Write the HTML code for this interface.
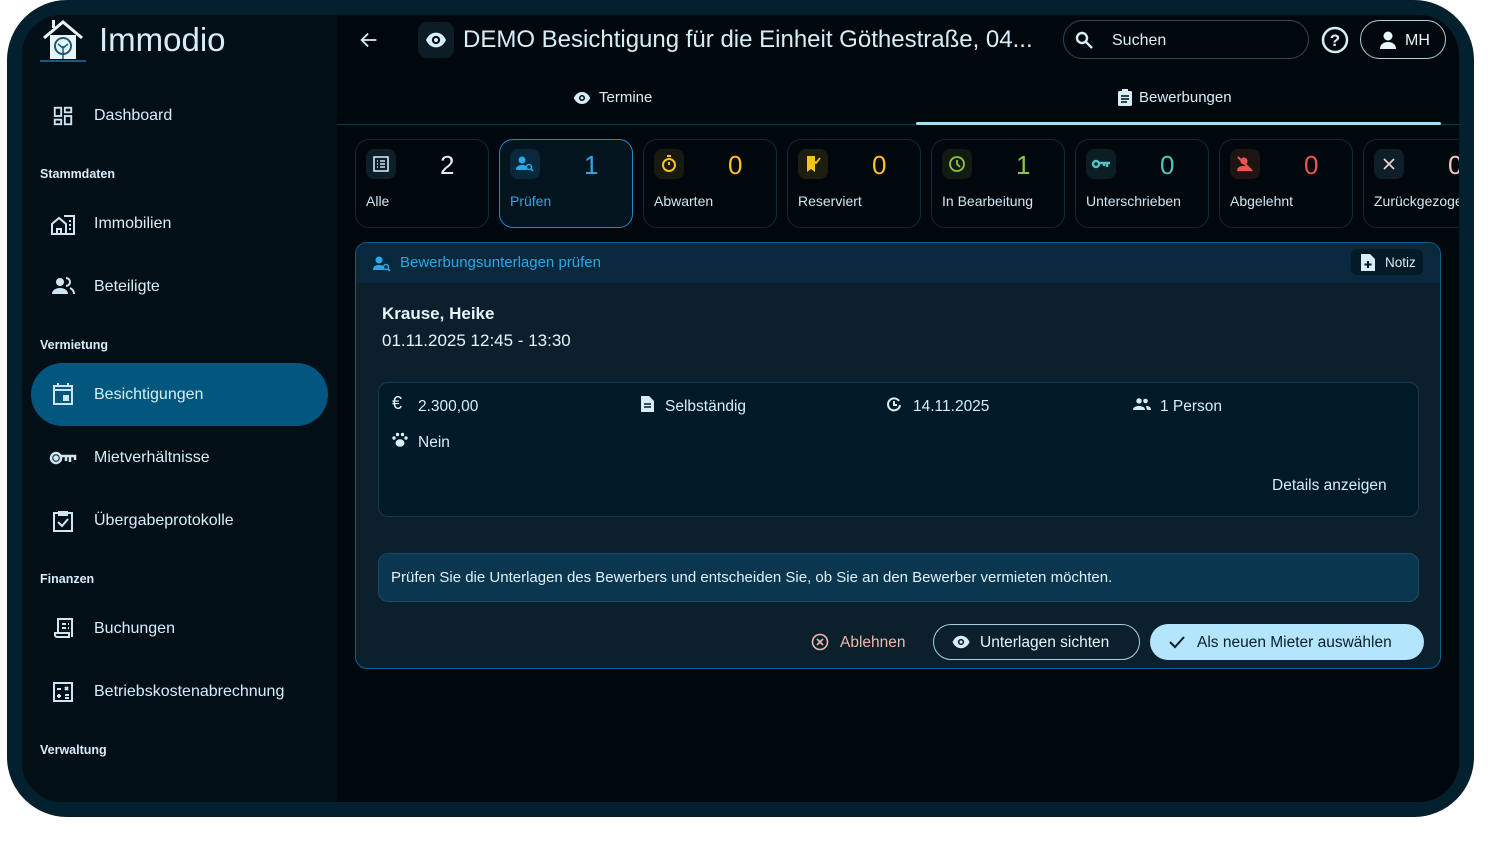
<!DOCTYPE html>
<html><head><meta charset="utf-8">
<style>
*{box-sizing:border-box;margin:0;padding:0}
body{width:1494px;height:846px;background:#fff;font-family:"Liberation Sans",sans-serif;position:relative;overflow:hidden;color:#d6eef8}
.frame{position:absolute;left:7px;top:0;width:1467px;height:817px;background:#03202f;border-radius:60px}
.screen{position:absolute;left:22px;top:15px;width:1437px;height:787px;background:#01080d;border-radius:40px;overflow:hidden}
.side{position:absolute;left:0;top:0;width:315px;height:787px;background:#020f17}
.abs{position:absolute}
.nav{position:absolute;left:72px;font-size:16px;color:#d6eef8}
.sec{position:absolute;left:18px;font-size:12.5px;font-weight:bold;color:#d6eef8}
.ic{position:absolute}
.tile{position:absolute;top:124px;width:134px;height:89px;border:1px solid #0d2a3a;border-radius:14px;background:#01080d}
.tile .ib{position:absolute;left:10px;top:9px;width:30px;height:30px;border-radius:8px;display:flex;align-items:center;justify-content:center}
.tile .n{position:absolute;left:84px;top:10px;font-size:26px}
.tile .l{position:absolute;left:10px;top:53px;font-size:14px;color:#cfe6f2;white-space:nowrap}
</style></head><body>
<div class="frame"></div>
<div class="screen">
 <div class="side">
  <svg class="ic" style="left:18px;top:3px" width="46" height="44" viewBox="0 0 46 44"><path d="M4 20 L23 4 L42 20" fill="none" stroke="#e8f6fc" stroke-width="3"/><rect x="10" y="17" width="26" height="24" fill="#e8f6fc"/><rect x="12" y="2" width="3" height="8" fill="#e8f6fc"/><circle cx="23" cy="28" r="8" fill="none" stroke="#1a5a7a" stroke-width="2"/><path d="M23 41V28M18 26l5 4 5-4" stroke="#1a5a7a" stroke-width="1.5" fill="none"/><rect x="0" y="42" width="46" height="2" fill="#1a5a7a"/></svg>
  <div class="abs" style="left:77px;top:6px;font-size:33px;color:#d6eef8">Immodio</div>

  <svg class="ic" style="left:30px;top:90px" width="22" height="22" viewBox="0 0 24 24" fill="none" stroke="#cfe6f2" stroke-width="2"><rect x="3" y="3" width="7" height="9"/><rect x="14" y="3" width="7" height="5"/><rect x="14" y="12" width="7" height="9"/><rect x="3" y="16" width="7" height="5"/></svg>
  <div class="nav" style="top:92px">Dashboard</div>
  <div class="sec" style="top:152px">Stammdaten</div>
  <svg class="ic" style="left:28px;top:198px" width="26" height="22" viewBox="0 0 26 22" fill="none" stroke="#cfe6f2" stroke-width="2"><path d="M2 21V11l7-6 7 6v10H2zM7 21v-5h4v5M14 3h10v18h-8"/><path d="M19 8h2M19 12h2M19 16h2"/></svg>
  <div class="nav" style="top:200px">Immobilien</div>
  <svg class="ic" style="left:29px;top:262px" width="24" height="18" viewBox="0 0 24 18" fill="#cfe6f2"><circle cx="9" cy="5" r="4"/><path d="M1 17c0-4 4-6 8-6s8 2 8 6z"/><path d="M15 1a4 4 0 0 1 0 8M19 11c2 1 4 3 4 6" stroke="#cfe6f2" stroke-width="2" fill="none"/></svg>
  <div class="nav" style="top:263px">Beteiligte</div>
  <div class="sec" style="top:323px">Vermietung</div>
  <div class="abs" style="left:9px;top:348px;width:297px;height:63px;border-radius:32px;background:#03577f"></div>
  <svg class="ic" style="left:30px;top:367px" width="22" height="24" viewBox="0 0 22 24" fill="none" stroke="#cfe6f2" stroke-width="2"><rect x="2" y="4" width="18" height="18"/><path d="M2 8h18M6 1v4M16 1v4"/><rect x="12" y="14" width="4" height="4" fill="#cfe6f2"/></svg>
  <div class="nav" style="top:371px">Besichtigungen</div>
  <svg class="ic" style="left:27px;top:435px" width="28" height="16" viewBox="0 0 28 16" fill="none" stroke="#cfe6f2" stroke-width="2.5"><circle cx="7" cy="8" r="5"/><circle cx="7" cy="8" r="1.5" fill="#cfe6f2"/><path d="M12 6h14v4M21 6v6M17 6v5"/></svg>
  <div class="nav" style="top:434px">Mietverhältnisse</div>
  <svg class="ic" style="left:30px;top:494px" width="22" height="24" viewBox="0 0 22 24" fill="none" stroke="#cfe6f2" stroke-width="2"><rect x="2" y="4" width="18" height="18"/><path d="M7 3h8v3H7zM6 13l4 4 6-7"/></svg>
  <div class="nav" style="top:497px">Übergabeprotokolle</div>
  <div class="sec" style="top:557px">Finanzen</div>
  <svg class="ic" style="left:31px;top:602px" width="22" height="22" viewBox="0 0 22 22" fill="none" stroke="#cfe6f2" stroke-width="2"><path d="M5 16V2h14v18M2 16h14v4H4a2 2 0 0 1-2-2zM9 7h4M9 11h4M15 7h1M15 11h1"/></svg>
  <div class="nav" style="top:605px">Buchungen</div>
  <svg class="ic" style="left:30px;top:666px" width="22" height="22" viewBox="0 0 22 22" fill="none" stroke="#cfe6f2" stroke-width="2"><rect x="2" y="2" width="18" height="18"/><path d="M5 8h4M13 6l3 3M16 6l-3 3M5 15h4M7 13v4M13 14h4M13 17h4"/></svg>
  <div class="nav" style="top:668px">Betriebskostenabrechnung</div>
  <div class="sec" style="top:728px">Verwaltung</div>
 </div>

 <!-- header -->
 <svg class="ic" style="left:336px;top:14px" width="22" height="22" viewBox="0 0 24 24" fill="none" stroke="#d6eef8" stroke-width="2"><path d="M20 12H4M11 5l-7 7 7 7"/></svg>
 <div class="abs" style="left:396px;top:7px;width:36px;height:36px;border-radius:9px;background:#0c1d28"></div>
 <svg class="ic" style="left:403px;top:15px" width="22" height="20" viewBox="0 0 24 20"><path d="M1 10C4 4 8 2 12 2s8 2 11 8c-3 6-7 8-11 8S4 16 1 10z" fill="#d6eef8"/><circle cx="12" cy="10" r="4.5" fill="#01080d"/><circle cx="12" cy="10" r="2.3" fill="#d6eef8"/></svg>
 <div class="abs" style="left:441px;top:11px;font-size:24px;color:#d6eef8;white-space:nowrap;width:580px;overflow:hidden">DEMO Besichtigung für die Einheit Göthestraße, 04...</div>
 <div class="abs" style="left:1041px;top:5px;width:246px;height:39px;border:1px solid #2a4a5a;border-radius:20px"></div>
 <svg class="ic" style="left:1053px;top:16px" width="18" height="18" viewBox="0 0 18 18" fill="none" stroke="#d6eef8" stroke-width="2.4"><circle cx="7" cy="7" r="5"/><path d="M11 11l6 6"/></svg>
 <div class="abs" style="left:1090px;top:17px;font-size:16px">Suchen</div>
 <svg class="ic" style="left:1299px;top:11px" width="28" height="28" viewBox="0 0 28 28"><circle cx="14" cy="14" r="12" fill="none" stroke="#d6eef8" stroke-width="2.5"/><text x="14" y="20" text-anchor="middle" font-size="17" font-weight="bold" fill="#d6eef8" font-family="Liberation Sans">?</text></svg>
 <div class="abs" style="left:1338px;top:5px;width:86px;height:39px;border:1.5px solid #a8cfe0;border-radius:20px"></div>
 <svg class="ic" style="left:1356px;top:15px" width="20" height="20" viewBox="0 0 20 20" fill="#e8f6fc"><circle cx="10" cy="6" r="4.5"/><path d="M2 19c0-5 4-7 8-7s8 2 8 7z"/></svg>
 <div class="abs" style="left:1383px;top:17px;font-size:16px;color:#e8f6fc">MH</div>

 <!-- tabs -->
 <svg class="ic" style="left:551px;top:76px" width="18" height="14" viewBox="0 0 24 18"><path d="M1 9C4 3 8 1 12 1s8 2 11 8c-3 6-7 8-11 8S4 15 1 9z" fill="#d6eef8"/><circle cx="12" cy="9" r="4" fill="#01080d"/><circle cx="12" cy="9" r="2" fill="#d6eef8"/></svg>
 <div class="abs" style="left:577px;top:74px;font-size:15px">Termine</div>
 <svg class="ic" style="left:1096px;top:74px" width="14" height="17" viewBox="0 0 14 17"><rect x="0" y="2" width="14" height="15" rx="1.5" fill="#d6eef8"/><rect x="4" y="0" width="6" height="4" fill="#d6eef8"/><path d="M3 7h8M3 10h8M3 13h6" stroke="#01080d" stroke-width="1.5"/></svg>
 <div class="abs" style="left:1117px;top:74px;font-size:15px">Bewerbungen</div>
 <div class="abs" style="left:315px;top:109px;width:1122px;height:1px;background:#0b3a52"></div>
 <div class="abs" style="left:894px;top:107px;width:525px;height:3px;border-radius:2px;background:#a8def5"></div>

 <!-- tiles -->
 <div class="tile" style="left:333px"><div class="ib" style="background:#0f1f29"><svg width="16" height="16" viewBox="0 0 16 16" fill="none" stroke="#cfe6f2" stroke-width="1.6"><rect x="1" y="1" width="14" height="14"/><path d="M4 5h1M7 5h5M4 8h1M7 8h5M4 11h1M7 11h5"/></svg></div><div class="n" style="color:#d6eef8">2</div><div class="l">Alle</div></div>
 <div class="tile" style="left:477px;border-color:#1e8ac8;background:#03141f"><div class="ib" style="background:#08283b"><svg width="18" height="16" viewBox="0 0 18 16" fill="#29a8e6"><circle cx="6" cy="4" r="3.5"/><path d="M0 14c0-4 3-5 6-5s4 1 5 1v4z"/><circle cx="13" cy="11" r="2.5" fill="none" stroke="#29a8e6" stroke-width="1.5"/><path d="M15 13l2 2" stroke="#29a8e6" stroke-width="1.6"/></svg></div><div class="n" style="color:#29a8e6">1</div><div class="l" style="color:#29a8e6">Prüfen</div></div>
 <div class="tile" style="left:621px"><div class="ib" style="background:#181a10"><svg width="18" height="18" viewBox="0 0 18 18" fill="none" stroke="#f5c31b" stroke-width="2"><circle cx="9" cy="10" r="6"/><path d="M7 1h4M9 7v3"/></svg></div><div class="n" style="color:#f5c31b">0</div><div class="l">Abwarten</div></div>
 <div class="tile" style="left:765px"><div class="ib" style="background:#1d1d10"><svg width="16" height="18" viewBox="0 0 16 18"><path d="M2 1h8v16l-4-3-4 3z" fill="#f5c31b"/><path d="M9 6l2 2 4-5" stroke="#f5c31b" stroke-width="1.8" fill="none"/></svg></div><div class="n" style="color:#f5c31b">0</div><div class="l">Reserviert</div></div>
 <div class="tile" style="left:909px"><div class="ib" style="background:#121a12"><svg width="18" height="18" viewBox="0 0 18 18" fill="none" stroke="#8dc63f" stroke-width="1.8"><circle cx="9" cy="9" r="7"/><path d="M9 5v4l3 3"/></svg></div><div class="n" style="color:#8dc63f">1</div><div class="l">In Bearbeitung</div></div>
 <div class="tile" style="left:1053px"><div class="ib" style="background:#0b1e24"><svg width="20" height="12" viewBox="0 0 20 12" fill="none" stroke="#4fc4c0" stroke-width="2.4"><circle cx="5" cy="6" r="3"/><path d="M8 5h11M16 5v4M13 5v3"/></svg></div><div class="n" style="color:#4fc4c0">0</div><div class="l">Unterschrieben</div></div>
 <div class="tile" style="left:1197px"><div class="ib" style="background:#1e1414"><svg width="18" height="18" viewBox="0 0 18 18"><circle cx="8" cy="6" r="3.5" fill="#ef5350"/><path d="M1 16c0-4 3-5 7-5s7 1 7 5z" fill="#ef5350"/><path d="M2 2l14 14" stroke="#ef5350" stroke-width="2"/></svg></div><div class="n" style="color:#ef5350">0</div><div class="l">Abgelehnt</div></div>
 <div class="tile" style="left:1341px;width:140px"><div class="ib" style="background:#0f1f29"><svg width="14" height="14" viewBox="0 0 14 14" stroke="#f2d6d6" stroke-width="1.6"><path d="M2 2l10 10M12 2L2 12"/></svg></div><div class="n" style="color:#f2c6c0">0</div><div class="l">Zurückgezogen</div></div>

 <!-- card -->
 <div class="abs" style="left:333px;top:227px;width:1086px;height:427px;border:1px solid #0e5f8c;border-radius:12px;background:#0b1f2c;overflow:hidden">
  <div class="abs" style="left:0;top:0;width:1086px;height:40px;background:#08293d"></div>
  <svg class="ic" style="left:17px;top:13px" width="18" height="16" viewBox="0 0 18 16" fill="#29a8e6"><circle cx="6" cy="4" r="3.5"/><path d="M0 14c0-4 3-5 6-5s4 1 5 1v4z"/><circle cx="13" cy="11" r="2.5" fill="none" stroke="#29a8e6" stroke-width="1.5"/><path d="M15 13l2 2" stroke="#29a8e6" stroke-width="1.6"/></svg>
  <div class="abs" style="left:44px;top:11px;font-size:15px;color:#29a8e6">Bewerbungsunterlagen prüfen</div>
  <div class="abs" style="left:995px;top:6px;width:72px;height:26px;border-radius:6px;background:#051a27"></div>
  <svg class="ic" style="left:1004px;top:10px" width="16" height="19" viewBox="0 0 16 19"><path d="M1 1h9l5 5v12H1z" fill="#d6eef8"/><path d="M8 8v7M4.5 11.5h7" stroke="#051a27" stroke-width="2"/></svg>
  <div class="abs" style="left:1029px;top:12px;font-size:13.5px;color:#d6eef8">Notiz</div>
  <div class="abs" style="left:26px;top:61px;font-size:17px;font-weight:bold;color:#e8f6fc">Krause, Heike</div>
  <div class="abs" style="left:26px;top:88px;font-size:17px;color:#e8f6fc">01.11.2025 12:45 - 13:30</div>
  <div class="abs" style="left:22px;top:139px;width:1041px;height:135px;border:1px solid #1a3a4c;border-radius:10px;background:#011a28"></div>
  <div class="abs" style="left:36px;top:150px;font-size:18px;color:#e8f6fc">€</div>
  <div class="abs" style="left:62px;top:155px;font-size:15.5px">2.300,00</div>
  <svg class="ic" style="left:285px;top:153px" width="13" height="16" viewBox="0 0 13 16"><path d="M0 0h8l5 5v11H0z" fill="#d6eef8"/><path d="M3 8h7M3 11h7" stroke="#011a28" stroke-width="1.4"/></svg>
  <div class="abs" style="left:309px;top:155px;font-size:15.5px">Selbständig</div>
  <svg class="ic" style="left:531px;top:154px" width="15" height="15" viewBox="0 0 15 15" fill="none" stroke="#d6eef8" stroke-width="2"><path d="M12 4a6 6 0 1 0 1 4"/><path d="M7 4v4h3"/></svg>
  <div class="abs" style="left:557px;top:155px;font-size:15.5px">14.11.2025</div>
  <svg class="ic" style="left:777px;top:155px" width="18" height="12" viewBox="0 0 18 12" fill="#d6eef8"><circle cx="6" cy="3" r="2.7"/><circle cx="12.5" cy="3" r="2.3"/><path d="M0 12c0-3 3-4 6-4s6 1 6 4zM13 8c3 0 5 1 5 4h-4z"/></svg>
  <div class="abs" style="left:804px;top:155px;font-size:15.5px">1 Person</div>
  <svg class="ic" style="left:36px;top:189px" width="16" height="15" viewBox="0 0 16 15" fill="#d6eef8"><ellipse cx="8" cy="11" rx="4.5" ry="3.8"/><circle cx="2" cy="6" r="1.7"/><circle cx="5.5" cy="2.5" r="1.7"/><circle cx="10.5" cy="2.5" r="1.7"/><circle cx="14" cy="6" r="1.7"/></svg>
  <div class="abs" style="left:62px;top:191px;font-size:15.5px">Nein</div>
  <div class="abs" style="left:916px;top:234px;font-size:15.5px">Details anzeigen</div>
  <div class="abs" style="left:22px;top:310px;width:1041px;height:49px;border:1px solid #1c4a62;border-radius:10px;background:#0a3650"></div>
  <div class="abs" style="left:35px;top:326px;font-size:15px;color:#e0f2fa">Prüfen Sie die Unterlagen des Bewerbers und entscheiden Sie, ob Sie an den Bewerber vermieten möchten.</div>
  <svg class="ic" style="left:455px;top:390px" width="18" height="18" viewBox="0 0 18 18" fill="none" stroke="#f2b8a8" stroke-width="1.6"><circle cx="9" cy="9" r="7.5"/><path d="M6 6l6 6M12 6l-6 6"/></svg>
  <div class="abs" style="left:484px;top:391px;font-size:15.5px;color:#f2b8a8">Ablehnen</div>
  <div class="abs" style="left:577px;top:381px;width:207px;height:36px;border:1.5px solid #a8cfe0;border-radius:18px"></div>
  <svg class="ic" style="left:595px;top:392px" width="20" height="14" viewBox="0 0 24 18"><path d="M1 9C4 3 8 1 12 1s8 2 11 8c-3 6-7 8-11 8S4 15 1 9z" fill="#d6eef8"/><circle cx="12" cy="9" r="4" fill="#0b1f2c"/><circle cx="12" cy="9" r="2" fill="#d6eef8"/></svg>
  <div class="abs" style="left:624px;top:391px;font-size:15.5px;color:#e8f6fc">Unterlagen sichten</div>
  <div class="abs" style="left:794px;top:381px;width:274px;height:36px;border-radius:18px;background:#b3e5fc"></div>
  <svg class="ic" style="left:813px;top:392px" width="16" height="14" viewBox="0 0 16 14" fill="none" stroke="#0a1e28" stroke-width="2"><path d="M1 7l5 5 9-10"/></svg>
  <div class="abs" style="left:841px;top:391px;font-size:15.5px;color:#0a1e28">Als neuen Mieter auswählen</div>
 </div>
</div>
</body></html>
